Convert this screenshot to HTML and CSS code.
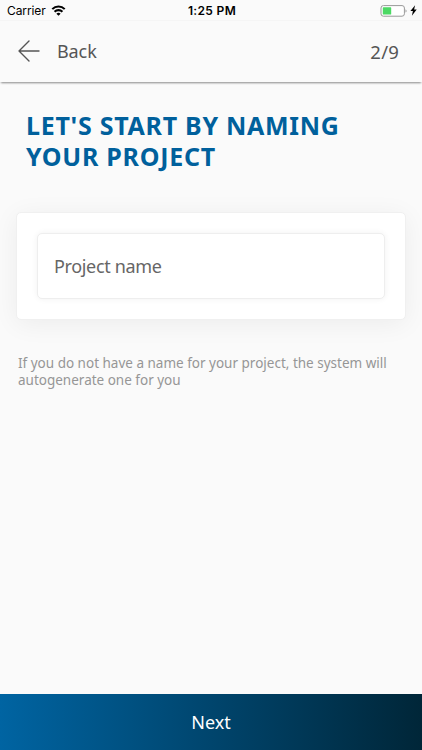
FILE: index.html
```html
<!DOCTYPE html>
<html lang="en">
<head>
    <meta charset="UTF-8">
    <meta name="viewport" content="width=device-width, initial-scale=1.0">
    <title>Project name</title>
    <link rel="stylesheet" href="styles.css">
</head>
<body>

    <div class="status-bar">
        <div class="carrier">
            <span>Carrier</span>
            <svg class="wifi" width="15" height="11" viewBox="0 0 16 12" fill="none" stroke="#000" stroke-width="2.3">
                <path d="M1.2 4.5a9.6 9.6 0 0 1 13.6 0"/>
                <path d="M3.7 7.4a6.1 6.1 0 0 1 8.6 0"/>
                <path d="M8 11.8L5.7 9.5a3.3 3.3 0 0 1 4.6 0z" fill="#000" stroke="none"/>
            </svg>
        </div>
        <span class="time">1:25 PM</span>
        <div class="battery">
            <svg width="27" height="12" viewBox="0 0 27 12">
                <rect x="1" y="0.6" width="23.4" height="10.6" rx="2.4" fill="#fff" stroke="#999" stroke-width="1"/>
                <rect x="2.8" y="2.3" width="8.4" height="7.2" rx="0.6" fill="#4cd964"/>
                <path d="M25.5 4.2c1.4.5 1.4 2.9 0 3.4z" fill="#999"/>
            </svg>
            <svg width="7" height="11" viewBox="0 0 7 11">
                <path d="M5.1 0.2L0.4 6.1H2.9L1.9 10.8L6.7 4.5H4.1z" fill="#000"/>
            </svg>
        </div>
    </div>

    <header>
        <a href="#" class="back">
            <svg width="22" height="22" viewBox="0 0 22 22" fill="none" stroke="#555" stroke-width="1.4" stroke-linecap="round" stroke-linejoin="round">
                <path d="M21 11H1M11 1L1 11l10 10"/>
            </svg>
            <span>Back</span>
        </a>
        <span class="step">2/9</span>
    </header>

    <main>
        <h1>LET'S START BY NAMING<br>YOUR PROJECT</h1>

        <form class="card" id="projectForm">
            <input type="text" id="projectName" placeholder="Project name">
        </form>

        <p class="hint">If you do not have a name for your project, the system will<br>autogenerate one for you</p>
    </main>

    <button type="submit" form="projectForm" class="next">Next</button>

</body>
</html>
```
FILE: styles.css
```css
* {
    box-sizing: border-box;
}

body {
    margin: 0;
    height: 100vh;
    display: flex;
    flex-direction: column;
    overflow: hidden;
    background-color: #fafafa;
    color: #555;
    font-family: "Noto Sans", sans-serif;
}

.status-bar {
    height: 21px;
    flex: none;
    display: grid;
    grid-template-columns: 1fr auto 1fr;
    align-items: center;
    padding: 1px 5px 0 7px;
    border-bottom: 1px solid #f5f5f5;
    color: #000;
    font-family: Inter, sans-serif;
    font-size: 12px;
}

.carrier {
    display: flex;
    align-items: center;
    gap: 5px;
    letter-spacing: -0.1px;
}

.wifi {
    display: block;
}

.time {
    font-weight: 600;
    letter-spacing: 0.35px;
}

.battery {
    display: flex;
    justify-content: flex-end;
    align-items: center;
    gap: 3px;
}

header {
    height: 61px;
    flex: none;
    display: flex;
    justify-content: space-between;
    align-items: center;
    padding: 0 23px 1px 18px;
    box-shadow: 0 2px 2px -1px rgba(0, 0, 0, 0.45);
    font-size: 18px;
}

.back {
    display: flex;
    align-items: center;
    gap: 17px;
    color: #555;
    text-decoration: none;
}

.back span {
    letter-spacing: -0.1px;
}

.step {
    font-size: 18.5px;
    letter-spacing: 0.2px;
}

main {
    flex: 1;
    padding: 28px 16px 0;
}

h1 {
    margin: 0 0 41px 10px;
    color: #00609c;
    font-size: 25px;
    font-weight: 700;
    line-height: 30.5px;
    letter-spacing: 0.72px;
    white-space: nowrap;
}

.card {
    padding: 20px;
    border: 1px solid #f0f0f0;
    border-radius: 5px;
    background-color: #fff;
    box-shadow: 0 4px 26px rgba(0, 0, 0, 0.06);
}

input {
    display: block;
    width: 100%;
    height: 66px;
    padding: 0 16px;
    border: 1px solid #eee;
    border-radius: 5px;
    outline: none;
    background-color: #fff;
    box-shadow: 0 0 6px rgba(0, 0, 0, 0.06);
    color: #555;
    font-family: inherit;
    font-size: 18px;
    letter-spacing: -0.35px;
}

input::placeholder {
    color: #666;
    opacity: 1;
}

.hint {
    margin: 35px 0 0 2px;
    color: #969696;
    font-size: 13.5px;
    line-height: 16.5px;
    white-space: nowrap;
}

.next {
    height: 56px;
    flex: none;
    border: none;
    background: linear-gradient(to right, #0064a2, #002638);
    color: #fff;
    font-family: inherit;
    font-size: 18px;
    cursor: pointer;
}
```
